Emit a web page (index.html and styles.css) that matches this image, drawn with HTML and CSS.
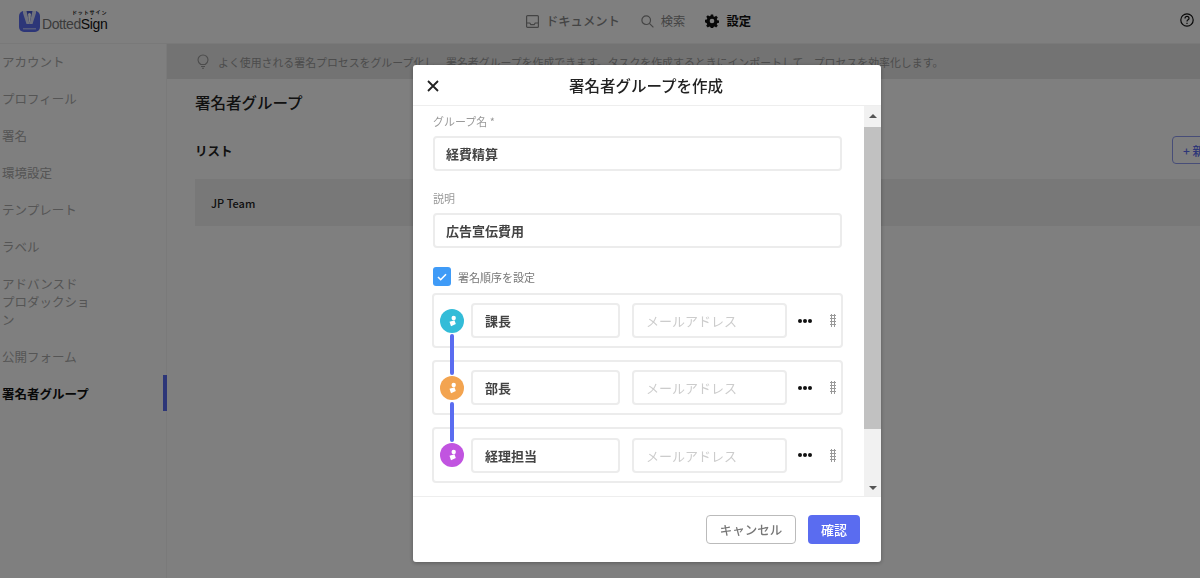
FILE: index.html
```html
<!DOCTYPE html>
<html lang="ja">
<head>
  <meta charset="utf-8">
  <title>DottedSign</title>
  <link rel="stylesheet" href="styles.css">
</head>
<body>
<div class="page">
  <header class="top">
    <div class="logo">
      <svg class="logo-mark" width="21" height="21" viewBox="0 0 21 21">
        <rect width="21" height="21" rx="5" fill="#5a6cf0"/>
        <path d="M4 0h13v2l-3.500 11h-6L4 2z" fill="#dfe3fb"/>
        <path d="M7.500 0l3 13 3-13z" fill="#4a5ad0"/>
        <path d="M9.800 3h1.400l.6 3-1.300 7-1.300-7z" fill="#fff"/>
        <circle cx="10.500" cy="3.500" r="1.500" fill="#fff"/>
        <rect x="4" y="17" width="13" height="1.500" fill="#aab4f6"/>
      </svg>
      <div class="logo-text">
        <span class="logo-kana">ドットサイン</span>
        <span class="logo-name">Dotted<b>Sign</b></span>
      </div>
    </div>
    <nav class="nav">
      <a class="nav-item">
        <svg width="13" height="13" viewBox="0 0 13 13" fill="none" stroke="currentColor" stroke-width="1.200">
          <rect x=".6" y=".6" width="11.800" height="11.800" rx="1"/>
          <path d="M.6 8h3.200l1 1.600h3.400l1-1.600h3.200"/>
        </svg>
        ドキュメント
      </a>
      <a class="nav-item nav-search">
        <svg width="13" height="13" viewBox="0 0 13 13" fill="none" stroke="currentColor" stroke-width="1.200">
          <circle cx="5.200" cy="5.200" r="4.300"/>
          <path d="M8.400 8.400l4 4"/>
        </svg>
        検索
      </a>
      <a class="nav-item nav-active">
        <svg width="14" height="14" viewBox="0 0 24 24" fill="currentColor">
          <path fill-rule="evenodd" d="M10 1h4l.6 3.100 2 .8 2.600-1.800 2.800 2.800-1.800 2.600.8 2 3 .6v4l-3.100.6-.8 2 1.800 2.600-2.800 2.800-2.600-1.800-2 .8-.5 3.100h-4l-.6-3.100-2-.8-2.600 1.800-2.800-2.800 1.800-2.600-.8-2L0 14v-4l3.100-.6.8-2L2.100 4.900l2.800-2.800 2.600 1.800 2-.8zM12 8a4 4 0 100 8 4 4 0 000-8z"/>
        </svg>
        設定
      </a>
    </nav>
    <svg class="help" width="14" height="14" viewBox="0 0 14 14" fill="none" stroke="currentColor" stroke-width="1.200">
      <circle cx="7" cy="7" r="6.200"/>
      <path d="M5 5.400a2 2 0 114 0c0 1.300-2 1.500-2 3"/>
      <path d="M7 9.800v1.100"/>
    </svg>
  </header>

  <div class="main">
    <aside class="side">
      <a class="side-item">アカウント</a>
      <a class="side-item">プロフィール</a>
      <a class="side-item">署名</a>
      <a class="side-item">環境設定</a>
      <a class="side-item">テンプレート</a>
      <a class="side-item">ラベル</a>
      <a class="side-item">アドバンスド<br>プロダックショ<br>ン</a>
      <a class="side-item">公開フォーム</a>
      <a class="side-item side-active">署名者グループ</a>
    </aside>
    <section class="content">
      <div class="banner">
        <svg width="12" height="15" viewBox="0 0 12 15" fill="none" stroke="currentColor" stroke-width="1.100">
          <path d="M3.800 10.500C2.500 9.500 1 8.300 1 6a5 5 0 0110 0c0 2.300-1.500 3.500-2.800 4.500z"/>
          <path d="M4 12.500h4M5 14.300h2"/>
        </svg>
        <span>よく使用される署名プロセスをグループ化し、署名者グループを作成できます。タスクを作成するときにインポートして、プロセスを効率化します。</span>
      </div>
      <div class="inner">
        <h1 class="title">署名者グループ</h1>
        <div class="list-head">
          <h2 class="list-title">リスト</h2>
          <button class="btn-new">+ 新規作成</button>
        </div>
        <div class="list-row">JP Team</div>
      </div>
    </section>
  </div>
</div>

<div class="overlay"></div>

<div class="modal">
  <div class="modal-head">
    <svg class="close" width="12" height="12" viewBox="0 0 12 12" stroke="#222" stroke-width="1.800" fill="none">
      <path d="M1 1l10 10M11 1L1 11"/>
    </svg>
    <span>署名者グループを作成</span>
  </div>
  <div class="modal-body">
    <div class="form">
      <label class="lbl">グループ名 *</label>
      <div class="field">経費精算</div>
      <label class="lbl lbl-2">説明</label>
      <div class="field">広告宣伝費用</div>
      <div class="check-row">
        <span class="check">
          <svg width="10" height="8" viewBox="0 0 10 8" fill="none" stroke="#fff" stroke-width="1.600"><path d="M1 4l2.700 2.700L9 1.300"/></svg>
        </span>
        署名順序を設定
      </div>
      <div class="signers">
        <div class="signer">
          <span class="avatar av-blue"><svg width="9" height="12" viewBox="0 0 9 12" fill="#fff"><circle cx="5.700" cy="3" r="2.200"/><path d="M1.500 6.800l5-1.500 1.300 3.700-4.800 2.300z"/></svg></span>
          <div class="name">課長</div>
          <div class="mail">メールアドレス</div>
          <span class="more"><i></i><i></i><i></i></span>
          <span class="grip"></span>
        </div>
        <div class="signer">
          <span class="avatar av-orange"><svg width="9" height="12" viewBox="0 0 9 12" fill="#fff"><circle cx="5.700" cy="3" r="2.200"/><path d="M1.500 6.800l5-1.500 1.300 3.700-4.800 2.300z"/></svg></span>
          <div class="name">部長</div>
          <div class="mail">メールアドレス</div>
          <span class="more"><i></i><i></i><i></i></span>
          <span class="grip"></span>
        </div>
        <div class="signer signer-last">
          <span class="avatar av-purple"><svg width="9" height="12" viewBox="0 0 9 12" fill="#fff"><circle cx="5.700" cy="3" r="2.200"/><path d="M1.500 6.800l5-1.500 1.300 3.700-4.800 2.300z"/></svg></span>
          <div class="name">経理担当</div>
          <div class="mail">メールアドレス</div>
          <span class="more"><i></i><i></i><i></i></span>
          <span class="grip"></span>
        </div>
        <span class="link link-1"></span>
        <span class="link link-2"></span>
      </div>
    </div>
    <div class="scroll">
      <span class="arrow arrow-up"></span>
      <span class="thumb"></span>
      <span class="arrow arrow-down"></span>
    </div>
  </div>
  <div class="modal-foot">
    <button class="btn-cancel">キャンセル</button>
    <button class="btn-ok">確認</button>
  </div>
</div>
</body>
</html>
```

FILE: styles.css
```css
* { box-sizing: border-box; }
html, body { margin: 0; height: 100%; overflow: hidden; }
body { background: #fff; color: #222; font-family: "Noto Sans CJK JP", "Noto Sans", sans-serif; font-size: 12px; }
.page { height: 578px; display: flex; flex-direction: column; }

.top { height: 44px; flex: none; display: flex; align-items: flex-start; position: relative; padding: 9px 0 0 19px; border-bottom: 1px solid #f2f2f2; }
.logo { display: flex; align-items: flex-end; }
.logo-mark { display: block; }
.logo-text { display: flex; flex-direction: column; align-items: flex-end; margin: 0 0 0 2px; }
.logo-kana { font-size: 5px; line-height: 6px; font-weight: 700; letter-spacing: .9px; margin-bottom: 1px; }
.logo-name { font-family: "Liberation Sans", sans-serif; font-size: 14px; line-height: 16px; letter-spacing: -.4px; color: #777; }
.logo-name b { font-weight: 400; color: #111; }
.nav { position: absolute; left: 526px; top: 0; height: 42px; display: flex; align-items: center; }
.nav-item { display: flex; align-items: center; gap: 7px; font-size: 12.300px; font-weight: 500; color: #888; }
.nav-search { margin-left: 21px; font-weight: 400; }
.nav-active { margin-left: 20px; color: #111; font-weight: 700; }
.help { position: absolute; left: 1180px; top: 13px; color: #111; }

.main { flex: 1; display: flex; min-height: 0; }
.side { width: 167px; flex: none; padding: 0 0 0 2px; border-right: 1px solid #f4f4f4; position: relative; }
.side-item { display: block; padding: 9px 0 10px; font-size: 12.500px; line-height: 18px; color: #aaa; }
.side-active { color: #111; font-weight: 700; }
.side-active::after { content: ""; position: absolute; right: -1px; top: 331px; width: 4px; height: 36px; background: #5a6cf0; }

.content { flex: 1; min-width: 0; overflow: hidden; }
.banner { height: 35px; display: flex; align-items: center; gap: 9px; padding-left: 30px; background: #e6e6e6; color: #999; white-space: nowrap; font-size: 10.900px; }
.inner { padding: 0 0 0 28px; }
.title { margin: 12px 0 0; font-size: 15.500px; line-height: 22px; font-weight: 500; }
.list-head { display: flex; align-items: center; height: 28px; margin-top: 23px; position: relative; }
.list-title { margin: 0; font-size: 12.500px; font-weight: 700; }
.btn-new { position: absolute; left: 977px; top: 0; width: 90px; height: 28px; padding: 0 0 0 10px; text-align: left; background: #fff; border: 1px solid #8f9af0; border-radius: 4px; color: #5a6cf0; font: 500 12px "Noto Sans CJK JP", sans-serif; }
.list-row { height: 47px; margin-top: 15px; padding-left: 16px; display: flex; align-items: center; background: #f0f0f0; font-weight: 500; font-size: 11px; }

.overlay { position: fixed; left: 0; top: 0; right: 0; bottom: 0; background: rgba(0, 0, 0, .5); }

.modal { position: fixed; left: 413px; top: 65px; width: 468px; height: 497px; background: #fff; border-radius: 3px; display: flex; flex-direction: column; box-shadow: 0 1px 4px rgba(0, 0, 0, .3); overflow: hidden; }
.modal-head { height: 41px; flex: none; display: flex; align-items: center; justify-content: center; position: relative; border-bottom: 1px solid #eee; padding-right: 2px; font-size: 15.500px; font-weight: 500; color: #222; }
.close { position: absolute; left: 14px; top: 15px; }
.modal-body { flex: 1; display: flex; min-height: 0; }
.form { flex: 1; padding: 7px 22px 0 20px; }
.lbl { display: block; font-size: 11px; line-height: 16px; color: #999; }
.lbl-2 { margin-top: 19px; }
.field { height: 35px; margin-top: 7px; padding-left: 11px; display: flex; align-items: center; border: 2px solid #ececec; border-radius: 4px; font-size: 13px; font-weight: 700; color: #444; }
.check-row { display: flex; align-items: center; gap: 7px; margin-top: 19px; font-size: 11px; color: #777; }
.check { width: 18px; height: 19px; display: flex; align-items: center; justify-content: center; background: #3f9bf7; border-radius: 3px; }

.signers { position: relative; margin: 7px -1px 0 -1px; }
.signer { height: 55px; margin-bottom: 12px; display: flex; align-items: center; padding-left: 6px; border: 2px solid #ececec; border-radius: 4px; }
.signer-last { height: 56px; margin-bottom: 0; }
.avatar { width: 24px; height: 24px; flex: none; border-radius: 50%; display: flex; align-items: center; justify-content: center; }
.av-blue { background: #33bcd8; }
.av-orange { background: #f3a450; }
.av-purple { background: #c154e0; }
.name { width: 149px; height: 35px; margin-left: 7px; padding-left: 12px; display: flex; align-items: center; flex: none; border: 2px solid #ececec; border-radius: 4px; font-size: 13px; font-weight: 700; color: #444; }
.mail { width: 155px; height: 35px; margin-left: 12px; padding-left: 12px; display: flex; align-items: center; flex: none; border: 2px solid #ececec; border-radius: 4px; font-size: 13px; color: #ccc; }
.more { display: flex; gap: 1px; margin-left: 11px; flex: none; }
.more i { width: 4px; height: 4px; border-radius: 50%; background: #111; }
.grip { width: 6px; height: 13px; margin-left: 18px; flex: none; background: radial-gradient(circle, #999 0, #999 1px, transparent 1.200px) 0 0 / 3px 3px; }
.link { position: absolute; left: 18px; width: 4px; background: #5a6cf0; border-radius: 2px; }
.link-1 { top: 41px; height: 41px; }
.link-2 { top: 109px; height: 40px; }

.scroll { width: 17px; flex: none; display: flex; flex-direction: column; background: #f1f1f1; }
.arrow { height: 21px; flex: none; display: flex; align-items: center; justify-content: center; }
.arrow::after { content: ""; border-left: 4px solid transparent; border-right: 4px solid transparent; }
.arrow-up { padding-bottom: 2px; }
.arrow-up::after { border-bottom: 4px solid #555; }
.arrow-down { margin-top: auto; padding-top: 4px; }
.arrow-down::after { border-top: 4px solid #555; }
.thumb { height: 302px; background: #c1c1c1; }

.modal-foot { height: 66px; flex: none; display: flex; justify-content: flex-end; align-items: center; gap: 12px; padding-right: 21px; border-top: 1px solid #eee; }
.btn-cancel { width: 90px; height: 29px; padding: 0; background: #fff; border: 1px solid #bbb; border-radius: 4px; color: #777; font: 500 12.500px "Noto Sans CJK JP", sans-serif; }
.btn-ok { width: 52px; height: 29px; padding: 0; background: #5a6cf0; border: 0; border-radius: 4px; color: #fff; font: 500 13px "Noto Sans CJK JP", sans-serif; }
```
